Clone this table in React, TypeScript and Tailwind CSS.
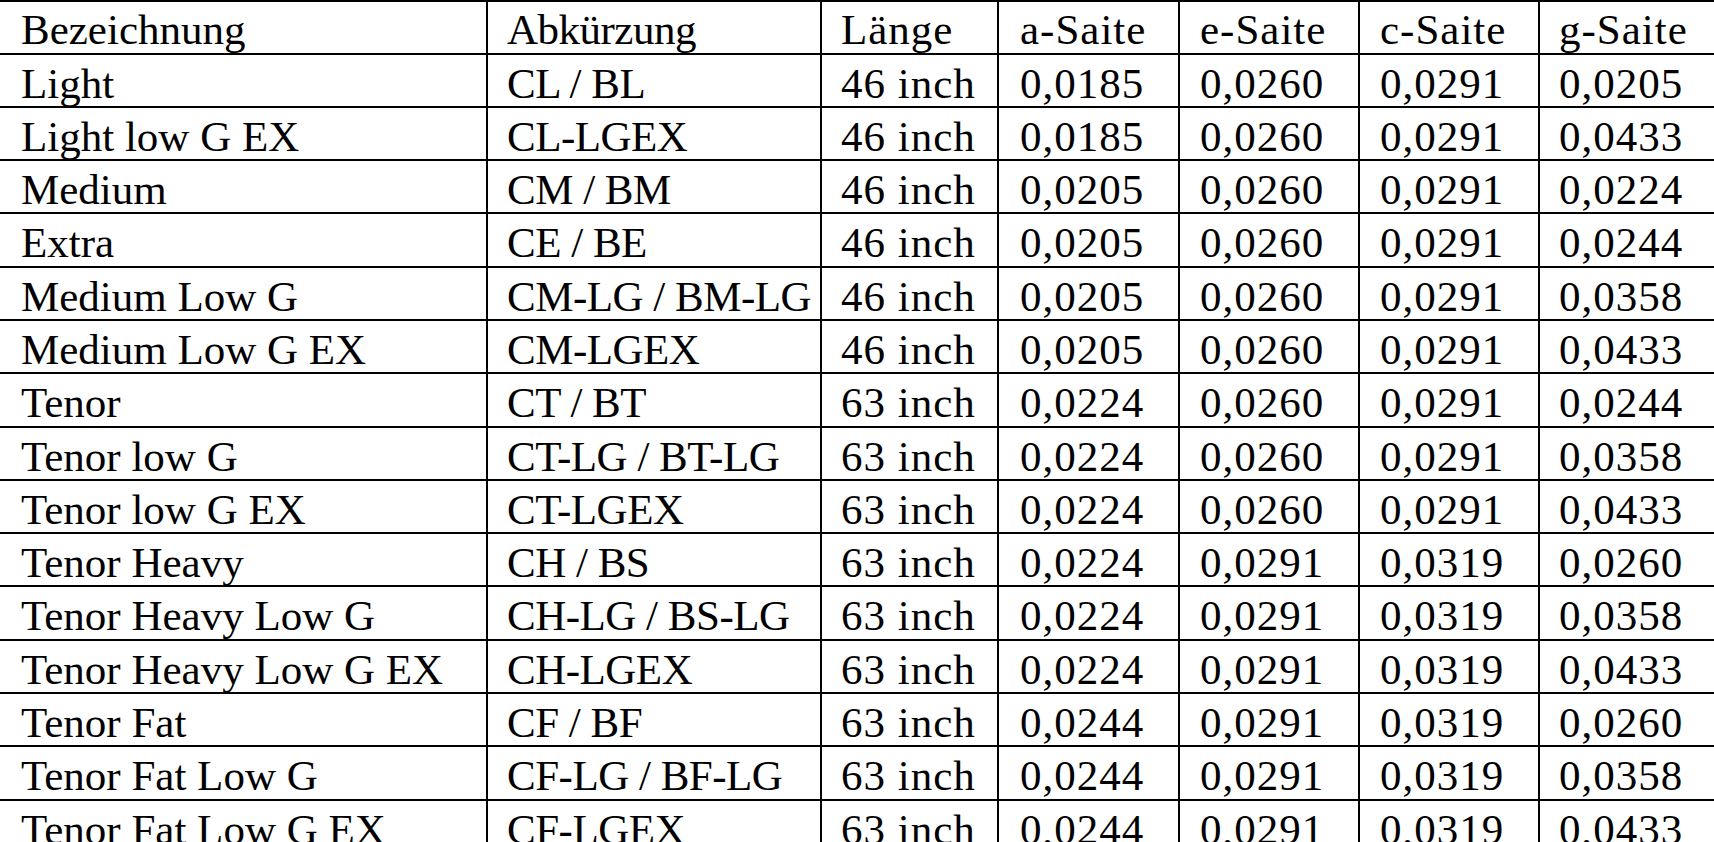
import React from "react";

const header = ["Bezeichnung", "Abkürzung", "Länge", "a-Saite", "e-Saite", "c-Saite", "g-Saite"];

const rows: string[][] = [
  ["Light", "CL / BL", "46 inch", "0,0185", "0,0260", "0,0291", "0,0205"],
  ["Light low G EX", "CL-LGEX", "46 inch", "0,0185", "0,0260", "0,0291", "0,0433"],
  ["Medium", "CM / BM", "46 inch", "0,0205", "0,0260", "0,0291", "0,0224"],
  ["Extra", "CE / BE", "46 inch", "0,0205", "0,0260", "0,0291", "0,0244"],
  ["Medium Low G", "CM-LG / BM-LG", "46 inch", "0,0205", "0,0260", "0,0291", "0,0358"],
  ["Medium Low G EX", "CM-LGEX", "46 inch", "0,0205", "0,0260", "0,0291", "0,0433"],
  ["Tenor", "CT / BT", "63 inch", "0,0224", "0,0260", "0,0291", "0,0244"],
  ["Tenor low G", "CT-LG / BT-LG", "63 inch", "0,0224", "0,0260", "0,0291", "0,0358"],
  ["Tenor low G EX", "CT-LGEX", "63 inch", "0,0224", "0,0260", "0,0291", "0,0433"],
  ["Tenor Heavy", "CH / BS", "63 inch", "0,0224", "0,0291", "0,0319", "0,0260"],
  ["Tenor Heavy Low G", "CH-LG / BS-LG", "63 inch", "0,0224", "0,0291", "0,0319", "0,0358"],
  ["Tenor Heavy Low G EX", "CH-LGEX", "63 inch", "0,0224", "0,0291", "0,0319", "0,0433"],
  ["Tenor Fat", "CF / BF", "63 inch", "0,0244", "0,0291", "0,0319", "0,0260"],
  ["Tenor Fat Low G", "CF-LG / BF-LG", "63 inch", "0,0244", "0,0291", "0,0319", "0,0358"],
  ["Tenor Fat Low G EX", "CF-LGEX", "63 inch", "0,0244", "0,0291", "0,0319", "0,0433"],
];

const cellCls = [
  "w-[488px] pl-[21px] border-r-2",
  "w-[334px] pl-[19px] border-r-2 tracking-[-0.5px]",
  "w-[177px] pl-[19px] border-r-2 tracking-[1px]",
  "w-[181px] pl-[21px] border-r-2 tracking-[1px]",
  "w-[180px] pl-[20px] border-r-2 tracking-[1px]",
  "w-[180px] pl-[20px] border-r-2 tracking-[1px]",
  "flex-1 pl-[19px] tracking-[1px]",
];

function Row({ cells, head }: { cells: string[]; head?: boolean }) {
  return (
    <div
      className={
        "flex shrink-0 border-black border-b-2 " +
        (head ? "h-[54.5px] border-t-2" : "h-[53.3px]")
      }
    >
      {cells.map((c, i) => (
        <div
          key={i}
          className={
            "shrink-0 h-full border-black whitespace-nowrap leading-[43px] " +
            (head ? "pt-[6px] " : "pt-[7px] ") +
            cellCls[i]
          }
        >
          {c}
        </div>
      ))}
    </div>
  );
}

export default function App() {
  return (
    <div
      className="w-[1714px] h-[842px] overflow-hidden bg-white text-black text-[43px]"
      style={{ fontFamily: '"Liberation Serif", "Times New Roman", serif' }}
    >
      <div className="flex flex-col">
        <Row cells={header} head />
        {rows.map((r, i) => (
          <Row key={i} cells={r} />
        ))}
      </div>
    </div>
  );
}
